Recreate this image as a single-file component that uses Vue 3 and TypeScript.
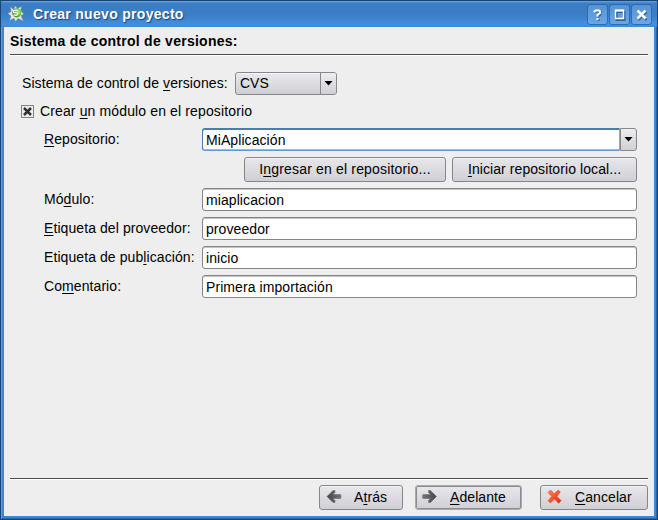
<script setup lang="ts">
import { ref } from 'vue'

interface Field {
  id: string
  before: string
  key: string
  after: string
  value: string
}

const system = ref('CVS')
const createModule = ref(true)
const repository = ref('MiAplicación')
const fields = ref<Field[]>([
  { id: 'module', before: 'Mó', key: 'd', after: 'ulo:', value: 'miaplicacion' },
  { id: 'vendor', before: '', key: 'E', after: 'tiqueta del proveedor:', value: 'proveedor' },
  { id: 'release', before: 'Etiqueta de pub', key: 'l', after: 'icación:', value: 'inicio' },
  { id: 'comment', before: 'Co', key: 'm', after: 'entario:', value: 'Primera importación' },
])
</script>

<template>
  <div class="window">
    <header class="titlebar">
      <svg class="app-icon" width="18" height="18" viewBox="0 0 18 18">
        <defs>
          <radialGradient id="gem" cx=".65" cy=".4" r=".7">
            <stop offset="0" stop-color="#a9f08e" />
            <stop offset=".5" stop-color="#55c843" />
            <stop offset="1" stop-color="#2b8a2b" />
          </radialGradient>
        </defs>
        <path d="M3.400 2L6.500 4.500 8.500.8l1.700 3 4.300-2.300-.8 4 3 3.500-2.700 1.700 2.300 5.300-5.300-2.500-2.500 3-1.500-3.300-4.500 2.300 1.500-4.300L.8 8.300l3.400-1.500z" fill="#e9e6da" stroke="#8d8b80" stroke-width=".5" />
        <circle cx="9.800" cy="7.800" r="4.600" fill="url(#gem)" />
        <path d="M10.800 5.300H7.500c-1.600 0-1.600 2.300 0 2.300h2c1.600 0 1.400 2.600-.2 2.600H6.500" fill="none" stroke="#f4fff0" stroke-width="1.200" />
      </svg>
      <h1>Crear nuevo proyecto</h1>
      <div class="window-buttons">
        <button type="button" aria-label="Ayuda">
          <svg width="20" height="20" viewBox="0 0 20 20"><path class="shade" d="M7.500 8V6.500h5V9.500L10.500 11v1.500M9.500 15h2" /><path d="M6.500 7.500V6.500L7.500 5.500h3.500l1 1v1.500l-2.500 2V11.500M8.500 14h2" /></svg>
        </button>
        <button type="button" aria-label="Maximizar">
          <svg width="20" height="20" viewBox="0 0 20 20"><rect class="shade" x="6.500" y="7" width="8" height="8" /><path d="M5.500 5.500h8v8h-8z" class="box" /><path d="M5 5.500h9" /></svg>
        </button>
        <button type="button" aria-label="Cerrar">
          <svg width="20" height="20" viewBox="0 0 20 20"><path class="shade" d="M6.500 7l8 8M14.500 7l-8 8" /><path class="cross" d="M5.500 5.500l8 8M13.500 5.500l-8 8" /></svg>
        </button>
      </div>
    </header>

    <main class="body">
      <h2>Sistema de control de versiones:</h2>
      <section class="page">
        <div class="system-row">
          <span class="label sys-label">Sistema de control de <u>v</u>ersiones:</span>
          <button type="button" class="select">
            <span class="select-value">{{ system }}</span>
            <span class="drop"><svg width="9" height="5" viewBox="0 0 9 5"><path d="M.5 0h8L4.500 4.500z" /></svg></span>
          </button>
        </div>

        <div class="check-row" @click="createModule = !createModule">
          <span class="checkbox">
            <svg v-if="createModule" width="9" height="9" viewBox="0 0 9 9"><path d="M1 1l7 7M8 1L1 8" /></svg>
          </span>
          <span class="label check-label">Crear <u>u</u>n módulo en el repositorio</span>
        </div>

        <div class="field-row">
          <label class="label" for="repo"><u>R</u>epositorio:</label>
          <div class="combo">
            <input id="repo" v-model="repository" type="text" />
            <span class="drop"><svg width="9" height="5" viewBox="0 0 9 5"><path d="M.5 0h8L4.500 4.500z" /></svg></span>
          </div>
        </div>

        <div class="repo-actions">
          <button type="button" class="push login">I<u>n</u>gresar en el repositorio...</button>
          <button type="button" class="push local"><u>I</u>niciar repositorio local...</button>
        </div>

        <div v-for="f in fields" :key="f.id" class="field-row">
          <label class="label" :for="f.id">{{ f.before }}<u>{{ f.key }}</u>{{ f.after }}</label>
          <input :id="f.id" v-model="f.value" class="line-edit" type="text" />
        </div>
      </section>

      <footer class="actions">
        <button type="button" class="push back">
          <svg width="16" height="16" viewBox="0 0 16 16">
            <defs><linearGradient id="arrow" x1="0" y1="0" x2="1" y2="0"><stop offset="0" stop-color="#444" /><stop offset="1" stop-color="#777" /></linearGradient></defs>
            <path d="M1 7.500L7 1.500h2v2L7 5.500h7q1 0 1 1v2q0 1-1 1H7l2 2v2H7z" fill="url(#arrow)" stroke="#666" stroke-width=".5" />
          </svg>
          <span>A<u>t</u>rás</span>
        </button>
        <button type="button" class="push next">
          <svg width="16" height="16" viewBox="0 0 16 16">
            <defs><linearGradient id="arrow-r" x1="0" y1="0" x2="1" y2="0"><stop offset="0" stop-color="#777" /><stop offset="1" stop-color="#444" /></linearGradient></defs>
            <path d="M14.500 7.500l-6-6h-2v2l2 2h-7q-1 0-1 1v2q0 1 1 1h7l-2 2v2h2z" fill="url(#arrow-r)" stroke="#666" stroke-width=".5" />
          </svg>
          <span><u>A</u>delante</span>
        </button>
        <button type="button" class="push cancel">
          <svg width="16" height="16" viewBox="0 0 16 16">
            <defs><linearGradient id="red" x1="0" y1="0" x2="1" y2="1"><stop offset="0" stop-color="#ff8a50" /><stop offset="1" stop-color="#f01c05" /></linearGradient></defs>
            <path d="M1 3.500L3.500 1 7.300 4.800l4-3.800 2 2-3.500 4.200 4.400 4.500-2.500 2.600L7.300 10l-3.900 4L1 11.700l3.700-4.300z" fill="url(#red)" stroke="#ea5530" stroke-width=".7" />
          </svg>
          <span><u>C</u>ancelar</span>
        </button>
      </footer>
    </main>
  </div>
</template>

<style>
body {
  margin: 0;
  background: #173c66;
}
</style>

<style scoped>
* {
  box-sizing: border-box;
}
.window {
  width: 658px;
  height: 520px;
  display: flex;
  flex-direction: column;
  padding: 0 4px 4px;
  border-radius: 4px 4px 0 0;
  background: #3c86d2;
  box-shadow: inset 1px 0 #1c456f, inset -1px 0 #1c456f, inset 0 -1px #1c456f, inset 0 1px #1c456f, inset 2px 0 #5b9fe4, inset -2px 0 #2a65a4, inset 0 -2px #2766aa;
  font-family: "Liberation Sans", Arial, sans-serif;
  font-size: 14px;
  color: #000;
}
.titlebar {
  flex: none;
  height: 27px;
  margin: 0 -3px;
  padding: 0 5px 0 6px;
  display: flex;
  align-items: center;
  border-radius: 3px 3px 0 0;
  background: linear-gradient(#1c456f 0 1px, #5c9bde 1px 2px, #3b7ec6 3px, #397dc4 14px, #4490df 25px, #3c86d2);
}
.app-icon {
  margin-top: 1px;
}
h1 {
  margin: 1px 0 0 8px;
  flex: 1;
  font-size: 14px;
  line-height: 18px;
  letter-spacing: 0.3px;
  color: #fff;
  text-shadow: 1px 1px 1px #1b4678;
}
.window-buttons {
  display: flex;
  gap: 1px;
  padding-top: 2px;
}
.window-buttons button {
  width: 21px;
  height: 21px;
  padding: 0;
  border: 1px solid #2e6cb0;
  border-radius: 3px;
  background: linear-gradient(#5593d5, #6aa6e6);
  display: flex;
  align-items: center;
  justify-content: center;
}
.window-buttons svg {
  flex: none;
}
.window-buttons path,
.window-buttons rect {
  fill: none;
  stroke: #fff;
  stroke-width: 2;
}
.window-buttons .box {
  stroke-width: 1.4;
}
.window-buttons .shade {
  stroke: #2c609c;
}
.window-buttons .cross {
  stroke-width: 2.5;
}
.body {
  flex: 1;
  display: flex;
  flex-direction: column;
  padding: 0 6px 6px;
  background: #eeeeee;
}
h2 {
  flex: none;
  height: 29px;
  margin: 0;
  border-bottom: 1px solid #fff;
  box-shadow: inset 0 -1px #4b4b4b;
  font-size: 14px;
  line-height: 28px;
  letter-spacing: 0.26px;
}
.page {
  flex: 1;
  padding: 16px 11px 0;
  display: flex;
  flex-direction: column;
}
.label {
  line-height: 16px;
  padding-bottom: 2px;
  white-space: nowrap;
  letter-spacing: 0.08px;
}
u {
  text-decoration: underline;
  text-decoration-thickness: 1px;
  text-underline-offset: 2px;
  text-decoration-skip-ink: none;
}
.system-row {
  height: 23px;
  display: flex;
  align-items: center;
}
.sys-label {
  width: 213px;
  padding-left: 1px;
  margin-right: 1px;
}
.select {
  width: 102px;
  height: 23px;
  padding: 0;
  display: flex;
  align-items: stretch;
  border: 1px solid #87888c;
  border-radius: 3px;
  background: linear-gradient(#e9e9ed, #cfcfd5);
  box-shadow: inset 0 1px #f7f7f9;
  font: inherit;
  color: #000;
}
.select-value {
  flex: 1;
  padding-left: 4px;
  text-align: left;
  line-height: 21px;
}
.drop {
  width: 16px;
  display: flex;
  align-items: center;
  justify-content: center;
  border-left: 1px solid #87888c;
  background: linear-gradient(#eeeeef, #cfcfd5);
  border-radius: 0 2px 2px 0;
}
.check-row {
  height: 21px;
  margin: 6px 0;
  display: flex;
  align-items: center;
}
.checkbox {
  width: 13px;
  height: 13px;
  border: 1px solid #838383;
  background: #ececec;
  display: flex;
  align-items: center;
  justify-content: center;
}
.checkbox path {
  stroke: #303030;
  stroke-width: 2.5;
}
.check-label {
  margin-left: 6px;
  letter-spacing: 0.13px;
}
.field-row {
  height: 23px;
  margin-bottom: 6px;
  display: grid;
  grid-template-columns: 158px 1fr;
  align-items: center;
  padding-left: 23px;
}
.field-row .label {
  padding-bottom: 1px;
}
input {
  min-width: 0;
  margin: 0;
  font: inherit;
  letter-spacing: 0.08px;
  color: #000;
  outline: none;
}
.line-edit {
  width: 100%;
  height: 23px;
  padding: 1px 3px;
  border: 1px solid #858587;
  border-radius: 3px;
  background: #fff;
  box-shadow: inset 0 1px #c4c4c6;
}
.combo {
  height: 23px;
  display: flex;
}
.combo input {
  flex: 1;
  padding: 2px 3px 1px;
  border: 1px solid #4a7dad;
  border-bottom-color: #6598c8;
  border-right: 1px solid #75aee2;
  border-radius: 3px 0 0 3px;
  background: #fff;
  box-shadow: inset 0 1px #4e7ba8, inset 0 -1px #8fc0ee;
}
.combo .drop {
  width: 17px;
  border: 1px solid #85888c;
  border-radius: 0 3px 3px 0;
}
.repo-actions {
  display: flex;
  justify-content: flex-end;
  gap: 6px;
  margin-bottom: 6px;
}
.push {
  height: 25px;
  padding: 0 0 1px;
  border: 1px solid #85868a;
  border-radius: 3px;
  background: linear-gradient(#e7e7eb, #cfcfd5);
  box-shadow: inset 0 1px #f4f4f6;
  font: inherit;
  line-height: 22px;
  color: #000;
  letter-spacing: 0.08px;
}
.login {
  width: 202px;
  letter-spacing: 0.17px;
}
.local {
  width: 185px;
}
.actions {
  height: 32px;
  flex: none;
  display: flex;
  justify-content: flex-end;
  align-items: flex-end;
  border-top: 1px solid #4b4b4b;
  box-shadow: inset 0 1px #fff;
}
.actions .push {
  display: flex;
  align-items: center;
  padding-left: 6px;
}
.actions svg {
  flex: none;
}
.actions span {
  margin-left: 12px;
}
.back {
  width: 84px;
  margin-right: 12px;
}
.next {
  width: 107px;
  margin-right: 18px;
  border-color: #aaaaae;
  box-shadow: inset 0 0 0 1px #8b8b90;
}
.cancel {
  width: 108px;
}
</style>
